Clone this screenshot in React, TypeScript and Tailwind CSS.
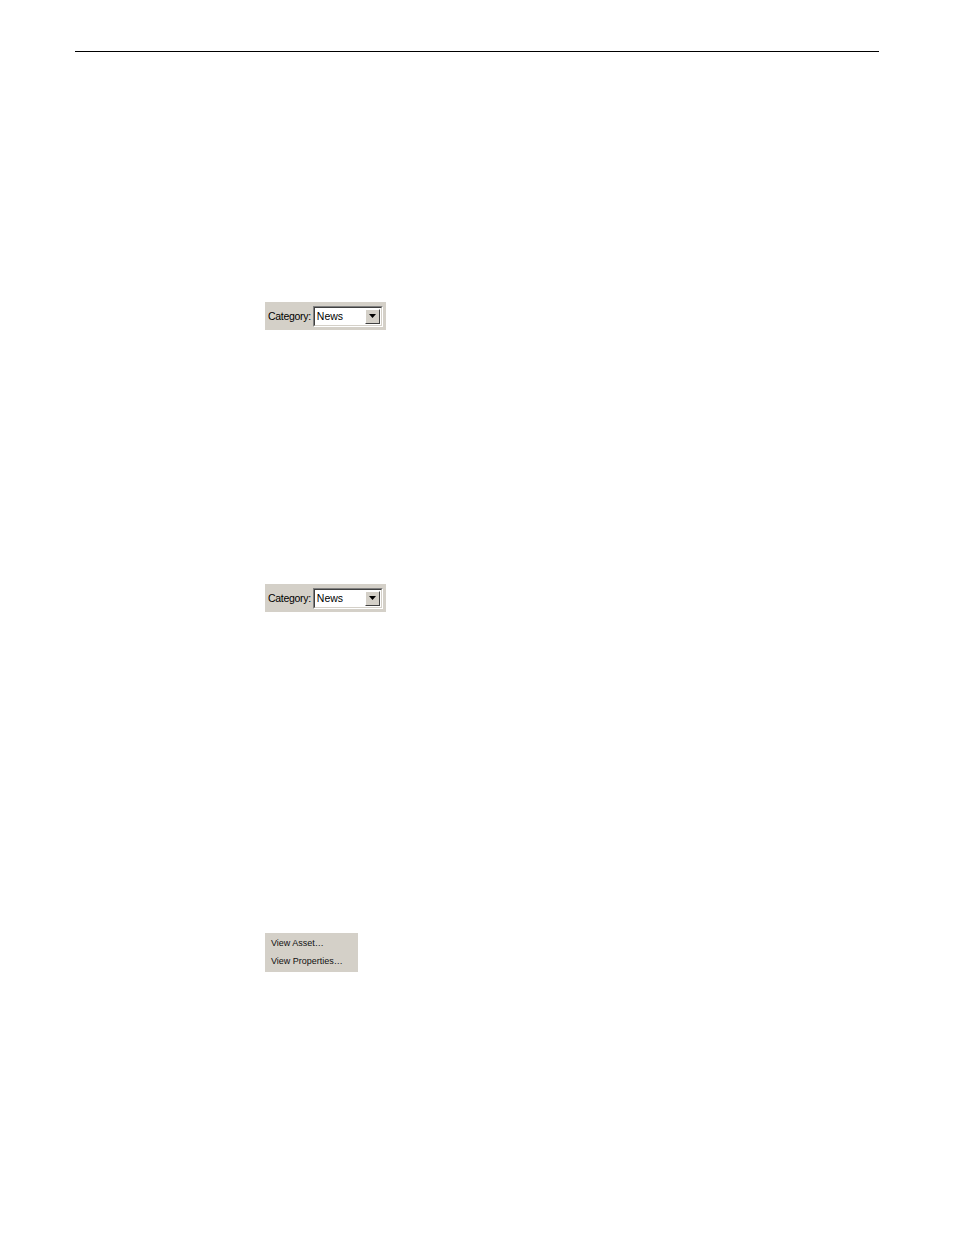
import React from "react";

function CategoryBox() {
  return (
    <div className="w-[121px] h-[28px] bg-[#d4d0c8] flex items-center pl-[3px] gap-[2px]" style={{ fontFamily: '"Liberation Sans", Arial, sans-serif' }}>
      <span className="text-[10.5px] text-black tracking-[-0.3px] leading-none">Category:</span>
      <div className="w-[70px] h-[21px] border-t-[#808080] border-l-[#808080] border-b-white border-r-white border">
        <div className="w-full h-full border border-t-[#404040] border-l-[#404040] border-b-[#d4d0c8] border-r-[#d4d0c8] bg-white flex items-center">
          <span className="flex-1 pl-[2px] text-[10.5px] text-black leading-none">News</span>
          <div className="w-[15px] h-[15px] mr-[1px] bg-[#d4d0c8] border border-t-white border-l-white border-b-[#404040] border-r-[#404040] flex items-center justify-center">
            <svg width="7" height="4" viewBox="0 0 7 4"><path d="M0 0h7L3.5 4z" fill="#000" /></svg>
          </div>
        </div>
      </div>
    </div>
  );
}

export default function App() {
  return (
    <div className="w-[954px] h-[1235px] bg-white overflow-hidden">
      <div className="pt-[51px] pl-[75px]">
        <div className="w-[804px] h-px bg-black" />
      </div>
      <div className="mt-[250px] ml-[265px]">
        <CategoryBox />
      </div>
      <div className="mt-[254px] ml-[265px]">
        <CategoryBox />
      </div>
      <div className="mt-[321px] ml-[265px]">
        <div className="w-[93px] h-[39px] bg-[#d4d0c8] pt-[2px] pl-[6px] text-[9px] text-[#111]" style={{ fontFamily: '"Liberation Sans", Arial, sans-serif' }}>
          <div className="h-[18px] flex items-center">View Asset…</div>
          <div className="h-[18px] flex items-center">View Properties…</div>
        </div>
      </div>
    </div>
  );
}
